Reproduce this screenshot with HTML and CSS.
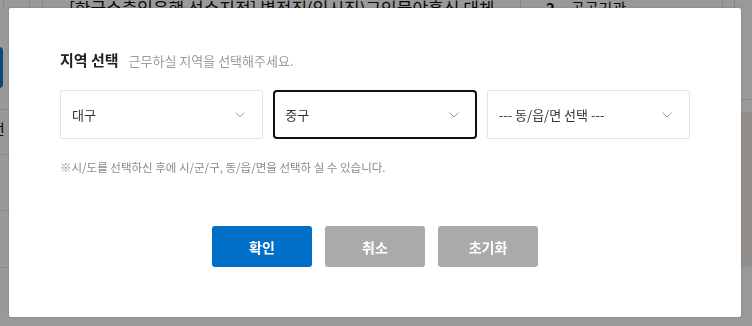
FILE: index.html
```html
<!DOCTYPE html>
<html>

    <head>
        <meta charset="UTF-8">
        <title>지역 선택</title>
        <link rel="stylesheet" href="styles.css">
    </head>
    <body>
        <!-- 뒤에 깔린 목록 페이지 -->
        <div class="page">
            <div class="top-row">
                <div class="cell c1"></div>
                <div class="cell c2"></div>
                <div class="cell c3"></div>
                <div class="cell c4"><span>[한국수출입은행 선수지점] 별정직(임시직)구인물야흠식 대체</span></div>
                <div class="cell c5"><span class="num">2</span><span>공공기관</span></div>
                <div class="cell c6"></div>
                <div class="cell c7"></div>
            </div>
            <div class="page-body">
                <div class="left-col">
                    <div class="btn-blue"></div>
                    <div class="line solid"></div>
                    <div class="left-text">선</div>
                    <div class="line dotted first"></div>
                    <div class="line dotted second"></div>
                    <div class="line solid last"></div>
                </div>
                <div class="right-col">
                    <div class="line solid right-line"></div>
                    <div class="beige"></div>
                </div>
            </div>
        </div>

        <!-- 지역 선택 팝업 -->
        <div class="dim">
            <div class="modal">
                <div class="modal-title">
                    <strong>지역 선택</strong>
                    <span>근무하실 지역을 선택해주세요.</span>
                </div>
                <div class="select-row">
                    <div class="select">
                        <span>대구</span>
                        <svg width="10" height="6" viewBox="0 0 10 6"><polyline points="0.5,0.5 5,5 9.5,0.5" fill="none" stroke="#9a9a9a" stroke-width="1"/></svg>
                    </div>
                    <div class="select focus">
                        <span>중구</span>
                        <svg width="10" height="6" viewBox="0 0 10 6"><polyline points="0.5,0.5 5,5 9.5,0.5" fill="none" stroke="#9a9a9a" stroke-width="1"/></svg>
                    </div>
                    <div class="select">
                        <span>--- 동/읍/면 선택 ---</span>
                        <svg width="10" height="6" viewBox="0 0 10 6"><polyline points="0.5,0.5 5,5 9.5,0.5" fill="none" stroke="#9a9a9a" stroke-width="1"/></svg>
                    </div>
                </div>
                <p class="note">※시/도를 선택하신 후에 시/군/구, 동/읍/면을 선택하 실 수 있습니다.</p>
                <div class="btns">
                    <button class="btn ok">확인</button>
                    <button class="btn gray">취소</button>
                    <button class="btn gray">초기화</button>
                </div>
            </div>
        </div>
    </body>

</html>
```

FILE: styles.css
```css
* {
    padding: 0;
    margin: 0;
    box-sizing: border-box;
}

body {
    width: 752px;
    height: 326px;
    overflow: hidden;
    background-color: #fff;
    font-family: "Noto Sans CJK KR", "Noto Sans", sans-serif;
    color: #222;
}

/* 뒤 페이지 */
.page {
    width: 752px;
    height: 326px;
}

.top-row {
    display: flex;
    height: 10px;
    overflow: hidden;
}

.cell {
    height: 10px;
    border-left: 1px solid #e2e2e2;
    font-size: 15px;
    line-height: 16px;
    color: #111;
    white-space: nowrap;
}

.cell span {
    display: inline-block;
    margin-top: -9px;
}

.c1 { width: 3px; border-left: 0; }
.c2 { width: 26px; }
.c3 { width: 13px; }
.c4 { width: 478px; padding-left: 26px; font-size: 17px; }
.c5 { width: 202px; padding-left: 25px; }
.c5 .num { margin-right: 16px; font-weight: 700; }
.c6 { width: 12px; }
.c7 { flex: 1; }

.page-body {
    display: flex;
    justify-content: space-between;
}

.left-col {
    width: 9px;
    overflow: hidden;
}

.btn-blue {
    width: 60px;
    height: 41px;
    margin: 37px 0 0 -57px;
    background-color: #1179cc;
    border-radius: 4px;
}

.line {
    height: 0;
}

.line.solid {
    border-top: 1px solid #e2e2e2;
}

.left-col .line.solid {
    margin-top: 21px;
}

.left-text {
    margin: 11px 0 0 -9px;
    font-size: 15px;
    line-height: 16px;
    color: #111;
}

.line.dotted {
    border-top: 1px dotted #c8c8c8;
}

.line.dotted.first { margin-top: 17px; }
.line.dotted.second { margin-top: 55px; }
.left-col .line.solid.last { margin-top: 56px; }

.right-col {
    width: 11px;
}

.right-col .right-line {
    margin-top: 89px;
}

.beige {
    height: 155px;
    margin-top: 12px;
    background-color: #f3ede8;
}

/* 팝업 */
.dim {
    position: fixed;
    left: 0;
    top: 0;
    width: 752px;
    height: 326px;
    padding: 8px 0 0 9px;
    background-color: rgba(0, 0, 0, 0.4);
}

.modal {
    width: 732px;
    height: 309px;
    padding: 42px 51px 50px 51px;
    background-color: #fff;
    border-radius: 2px;
    box-shadow: 0 0 2px rgba(0, 0, 0, 0.25);
}

.modal-title {
    display: flex;
    align-items: baseline;
    height: 20px;
    line-height: 20px;
}

.modal-title strong {
    font-size: 15px;
    font-weight: 700;
    color: #222;
}

.modal-title span {
    margin-left: 10px;
    font-size: 13px;
    color: #9a9a9a;
}

.select-row {
    display: grid;
    grid-template-columns: repeat(3, 1fr);
    gap: 10px;
    margin-top: 20px;
}

.select {
    display: flex;
    align-items: center;
    justify-content: space-between;
    height: 49px;
    padding: 0 17px 0 11px;
    border: 1px solid #e3e3e3;
    border-radius: 2px;
    font-size: 13px;
    color: #333;
}

.select.focus {
    padding: 0 16px 0 10px;
    border: 2px solid #111;
    border-radius: 4px;
}

.select svg {
    display: block;
}

.note {
    margin-top: 20px;
    height: 16px;
    line-height: 16px;
    font-size: 11.5px;
    color: #8a8a8a;
}

.btns {
    display: flex;
    justify-content: center;
    gap: 13px;
    margin-top: 51px;
}

.btn {
    width: 100px;
    height: 41px;
    border: 0;
    border-radius: 3px;
    font-family: inherit;
    font-size: 14px;
    font-weight: 700;
    color: #fff;
}

.btn.ok {
    background-color: #006fc8;
}

.btn.gray {
    background-color: #aaaaaa;
}
```
